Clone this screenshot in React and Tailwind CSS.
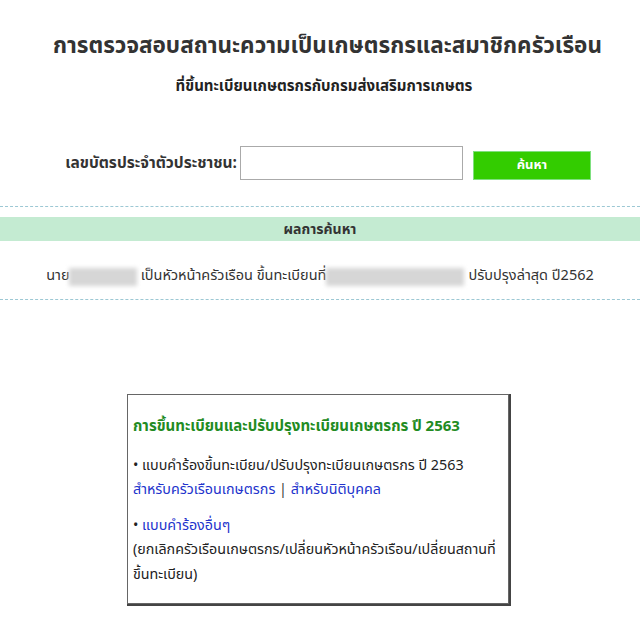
export default function App() {
  const font = { fontFamily: 'Tahoma, "Noto Sans Thai", "Noto Sans", sans-serif' };
  return (
    <div className="w-[640px] h-[617px] bg-white text-[#333] overflow-hidden" style={font}>
      <h1 className="pt-[31px] pl-[15px] text-center text-[22.5px] font-bold leading-[30px] text-[#333]">
        การตรวจสอบสถานะความเป็นเกษตรกรและสมาชิกครัวเรือน
      </h1>
      <h2 className="mt-[16px] pl-[8px] text-center text-[15px] font-bold leading-[20px] text-[#222]">
        ที่ขึ้นทะเบียนเกษตรกรกับกรมส่งเสริมการเกษตร
      </h2>
      <div className="mt-[49px] flex items-start pl-[60px]">
        <span className="w-[180px] mt-[6px] text-right text-[15.5px] font-bold text-[#333] pr-[3px] whitespace-nowrap">เลขบัตรประจำตัวประชาชน:</span>
        <div className="w-[223px] h-[34px] border border-[#aaa] bg-white" />
        <div className="ml-[10px] mt-[5px] w-[118px] h-[29px] bg-[#33cc00] border border-[#7fe07f] flex items-center justify-center text-white text-[13px] font-bold">
          ค้นหา
        </div>
      </div>
      <div className="mt-[26px] border-t border-dashed border-[#9cc8d4]" />
      <div className="mt-[10px] h-[24px] bg-[#c4ebd2] flex items-center justify-center text-[14px] font-bold text-[#333]">
        ผลการค้นหา
      </div>
      <div className="mt-[26px] flex items-center justify-center text-[14.5px] text-[#333] h-[20px] whitespace-nowrap">
        <span>นาย</span>
        <span className="w-[68px] h-[18px] bg-[#d6d6d6] blur-[2px] -ml-[1px]" />
        <span className="ml-[4px]">เป็นหัวหน้าครัวเรือน ขึ้นทะเบียนที่</span>
        <span className="w-[138px] h-[18px] bg-[#d6d6d6] blur-[2px]" />
        <span className="ml-[4px]">ปรับปรุงล่าสุด ปี2562</span>
      </div>
      <div className="mt-[12px] border-t border-dashed border-[#9cc8d4]" />
      <div className="mt-[94px] ml-[127px] w-[382px] h-[210px] border border-[#666] shadow-[1px_1px_0_1px_#444] px-[5px] pt-[20px] text-[14.3px] leading-[24.5px] text-[#222]">
        <div className="text-[#228b22] font-bold text-[15px]">การขึ้นทะเบียนและปรับปรุงทะเบียนเกษตรกร ปี 2563</div>
        <div className="mt-[14px]">• แบบคำร้องขึ้นทะเบียน/ปรับปรุงทะเบียนเกษตรกร ปี 2563</div>
        <div className="text-[#2233cc]">
          <span>สำหรับครัวเรือนเกษตรกร</span>
          <span className="text-[#333]"> | </span>
          <span>สำหรับนิติบุคคล</span>
        </div>
        <div className="mt-[11px]">• <span className="text-[#2233cc]">แบบคำร้องอื่นๆ</span></div>
        <div>(ยกเลิกครัวเรือนเกษตรกร/เปลี่ยนหัวหน้าครัวเรือน/เปลี่ยนสถานที่</div>
        <div>ขึ้นทะเบียน)</div>
      </div>
    </div>
  );
}
